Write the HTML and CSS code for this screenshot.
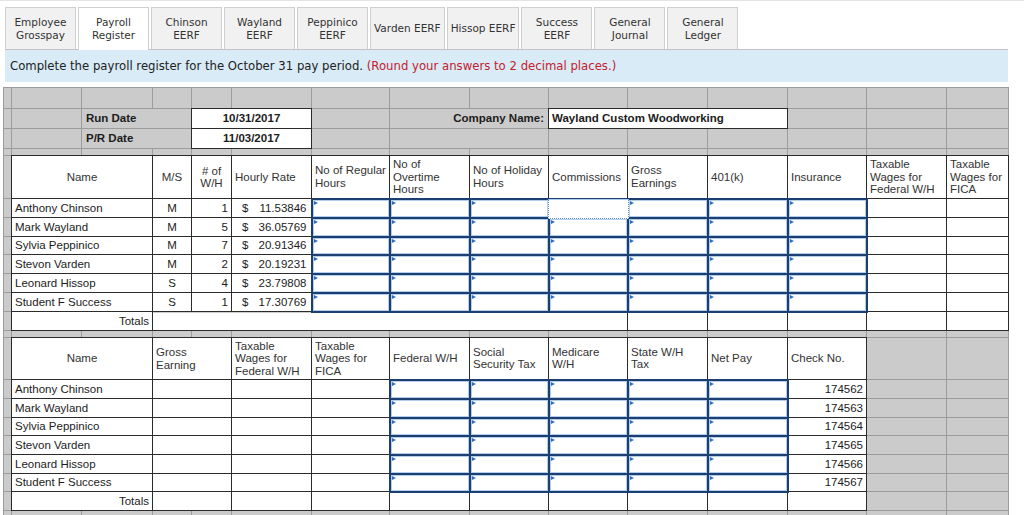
FILE: index.html
```html
<!DOCTYPE html>
<html>
<head>
<meta charset="utf-8">
<title>Payroll Register</title>
<link rel="stylesheet" href="styles.css">
</head>
<body>
<div class="page">
  <nav class="tabs">
    <div class="tab">Employee<br>Grosspay</div>
    <div class="tab active">Payroll<br>Register</div>
    <div class="tab">Chinson<br>EERF</div>
    <div class="tab">Wayland<br>EERF</div>
    <div class="tab">Peppinico<br>EERF</div>
    <div class="tab">Varden EERF</div>
    <div class="tab">Hissop EERF</div>
    <div class="tab">Success<br>EERF</div>
    <div class="tab">General<br>Journal</div>
    <div class="tab">General<br>Ledger</div>
  </nav>
  <div class="banner">Complete the payroll register for the October 31 pay period.&nbsp;<span class="note">(Round your answers to 2 decimal places.)</span></div>

  <table class="sheet">
    <colgroup>
      <col class="k0"><col class="k1"><col class="k2"><col class="k3"><col class="k4"><col class="k5"><col class="k6"><col class="k7"><col class="k8"><col class="k9"><col class="k10"><col class="k11"><col class="k12"><col class="k13"><col class="k14">
    </colgroup>
    <tbody>
      <tr class="h21"><td></td><td></td><td></td><td></td><td></td><td></td><td></td><td></td><td></td><td></td><td></td><td></td><td></td><td></td><td></td></tr>
      <tr class="h20">
        <td></td><td></td>
        <td colspan="2" class="lbl">Run Date</td>
        <td colspan="2" class="w b c">10/31/2017</td>
        <td></td>
        <td colspan="2" class="lbl r">Company Name:</td>
        <td colspan="3" class="w b">Wayland Custom Woodworking</td>
        <td></td><td></td><td></td>
      </tr>
      <tr class="h20">
        <td></td><td></td>
        <td colspan="2" class="lbl">P/R Date</td>
        <td colspan="2" class="w b c">11/03/2017</td>
        <td></td>
        <td colspan="2"></td>
        <td></td><td></td><td></td><td></td><td></td><td></td>
      </tr>
      <tr class="h7"><td></td><td></td><td></td><td></td><td></td><td></td><td></td><td></td><td></td><td></td><td></td><td></td><td></td><td></td><td></td></tr>

      <tr class="h43 hd">
        <td class="g"></td>
        <td colspan="2" class="w c">Name</td>
        <td class="w c">M/S</td>
        <td class="w c"># of<br>W/H</td>
        <td class="w">Hourly Rate</td>
        <td class="w">No of Regular<br>Hours</td>
        <td class="w">No of<br>Overtime<br>Hours</td>
        <td class="w">No of Holiday<br>Hours</td>
        <td class="w">Commissions</td>
        <td class="w">Gross<br>Earnings</td>
        <td class="w">401(k)</td>
        <td class="w">Insurance</td>
        <td class="w">Taxable<br>Wages for<br>Federal W/H</td>
        <td class="w">Taxable<br>Wages for<br>FICA</td>
      </tr>
      <tr class="h19">
        <td></td><td colspan="2" class="w">Anthony Chinson</td><td class="w c">M</td><td class="w r">1</td>
        <td class="w rate"><span>$</span><span>11.53846</span></td>
        <td class="in"></td><td class="in"></td><td class="in"></td><td class="in focus"></td><td class="in"></td><td class="in"></td><td class="in"></td>
        <td class="w"></td><td class="w"></td>
      </tr>
      <tr class="h19">
        <td></td><td colspan="2" class="w">Mark Wayland</td><td class="w c">M</td><td class="w r">5</td>
        <td class="w rate"><span>$</span><span>36.05769</span></td>
        <td class="in"></td><td class="in"></td><td class="in"></td><td class="in"></td><td class="in"></td><td class="in"></td><td class="in"></td>
        <td class="w"></td><td class="w"></td>
      </tr>
      <tr class="h18">
        <td></td><td colspan="2" class="w">Sylvia Peppinico</td><td class="w c">M</td><td class="w r">7</td>
        <td class="w rate"><span>$</span><span>20.91346</span></td>
        <td class="in"></td><td class="in"></td><td class="in"></td><td class="in"></td><td class="in"></td><td class="in"></td><td class="in"></td>
        <td class="w"></td><td class="w"></td>
      </tr>
      <tr class="h19">
        <td></td><td colspan="2" class="w">Stevon Varden</td><td class="w c">M</td><td class="w r">2</td>
        <td class="w rate"><span>$</span><span>20.19231</span></td>
        <td class="in"></td><td class="in"></td><td class="in"></td><td class="in"></td><td class="in"></td><td class="in"></td><td class="in"></td>
        <td class="w"></td><td class="w"></td>
      </tr>
      <tr class="h19">
        <td></td><td colspan="2" class="w">Leonard Hissop</td><td class="w c">S</td><td class="w r">4</td>
        <td class="w rate"><span>$</span><span>23.79808</span></td>
        <td class="in"></td><td class="in"></td><td class="in"></td><td class="in"></td><td class="in"></td><td class="in"></td><td class="in"></td>
        <td class="w"></td><td class="w"></td>
      </tr>
      <tr class="h19">
        <td></td><td colspan="2" class="w">Student F Success</td><td class="w c">S</td><td class="w r">1</td>
        <td class="w rate"><span>$</span><span>17.30769</span></td>
        <td class="in"></td><td class="in"></td><td class="in"></td><td class="in"></td><td class="in"></td><td class="in"></td><td class="in"></td>
        <td class="w"></td><td class="w"></td>
      </tr>
      <tr class="h19">
        <td></td><td colspan="2" class="w r">Totals</td>
        <td colspan="7" class="w"></td>
        <td class="w"></td><td class="w"></td><td class="w"></td><td class="w"></td><td class="w"></td>
      </tr>
      <tr class="h7"><td></td><td></td><td></td><td></td><td></td><td></td><td></td><td></td><td></td><td></td><td></td><td></td><td></td><td></td><td></td></tr>

      <tr class="h42 hd">
        <td></td>
        <td colspan="2" class="w c">Name</td>
        <td colspan="2" class="w">Gross<br>Earning</td>
        <td class="w">Taxable<br>Wages for<br>Federal W/H</td>
        <td class="w">Taxable<br>Wages for<br>FICA</td>
        <td class="w">Federal W/H</td>
        <td class="w">Social<br>Security Tax</td>
        <td class="w">Medicare<br>W/H</td>
        <td class="w">State W/H<br>Tax</td>
        <td class="w">Net Pay</td>
        <td class="w">Check No.</td>
        <td></td><td></td>
      </tr>
      <tr class="h19">
        <td></td><td colspan="2" class="w">Anthony Chinson</td><td colspan="2" class="w"></td><td class="w"></td><td class="w"></td>
        <td class="in"></td><td class="in"></td><td class="in"></td><td class="in"></td><td class="in"></td>
        <td class="w r">174562</td><td></td><td></td>
      </tr>
      <tr class="h19">
        <td></td><td colspan="2" class="w">Mark Wayland</td><td colspan="2" class="w"></td><td class="w"></td><td class="w"></td>
        <td class="in"></td><td class="in"></td><td class="in"></td><td class="in"></td><td class="in"></td>
        <td class="w r">174563</td><td></td><td></td>
      </tr>
      <tr class="h18">
        <td></td><td colspan="2" class="w">Sylvia Peppinico</td><td colspan="2" class="w"></td><td class="w"></td><td class="w"></td>
        <td class="in"></td><td class="in"></td><td class="in"></td><td class="in"></td><td class="in"></td>
        <td class="w r">174564</td><td></td><td></td>
      </tr>
      <tr class="h19">
        <td></td><td colspan="2" class="w">Stevon Varden</td><td colspan="2" class="w"></td><td class="w"></td><td class="w"></td>
        <td class="in"></td><td class="in"></td><td class="in"></td><td class="in"></td><td class="in"></td>
        <td class="w r">174565</td><td></td><td></td>
      </tr>
      <tr class="h19">
        <td></td><td colspan="2" class="w">Leonard Hissop</td><td colspan="2" class="w"></td><td class="w"></td><td class="w"></td>
        <td class="in"></td><td class="in"></td><td class="in"></td><td class="in"></td><td class="in"></td>
        <td class="w r">174566</td><td></td><td></td>
      </tr>
      <tr class="h18">
        <td></td><td colspan="2" class="w">Student F Success</td><td colspan="2" class="w"></td><td class="w"></td><td class="w"></td>
        <td class="in"></td><td class="in"></td><td class="in"></td><td class="in"></td><td class="in"></td>
        <td class="w r">174567</td><td></td><td></td>
      </tr>
      <tr class="h19">
        <td></td><td colspan="2" class="w r">Totals</td><td colspan="2" class="w"></td><td class="w"></td><td class="w"></td>
        <td class="w"></td><td class="w"></td><td class="w"></td><td class="w"></td><td class="w"></td>
        <td class="w"></td><td></td><td></td>
      </tr>
      <tr class="h7"><td></td><td></td><td></td><td></td><td></td><td></td><td></td><td></td><td></td><td></td><td></td><td></td><td></td><td></td><td></td></tr>
    </tbody>
  </table>
</div>
</body>
</html>
```

FILE: styles.css
```css
html, body {
  margin: 0;
  padding: 0;
  background: #ffffff;
}

.page {
  border-top: 1px solid #e4e4e4;
  padding-top: 6px;
}

/* ---------- tabs ---------- */
.tabs {
  display: flex;
  gap: 2px;
  margin-left: 5px;
  height: 42px;
}

.tab {
  min-width: 71px;
  box-sizing: border-box;
  padding: 0 3px;
  display: flex;
  align-items: center;
  justify-content: center;
  text-align: center;
  font: 10.5px/13px "DejaVu Sans", Verdana, sans-serif;
  color: #333333;
  background: #f1f1f1;
  border: 1px solid #cfcfcf;
  border-bottom: none;
  white-space: nowrap;
}

.tab.active {
  background: #ffffff;
  height: 43px;
  margin-bottom: -1px;
  position: relative;
  z-index: 1;
}

/* ---------- banner ---------- */
.banner {
  margin-left: 5px;
  width: 1003px;
  box-sizing: border-box;
  height: 33px;
  border-top: 1px solid #c4c4c4;
  background: #d8ebf7;
  padding-left: 5px;
  display: flex;
  align-items: center;
  font: 11.7px "DejaVu Sans", Verdana, sans-serif;
  color: #222222;
  white-space: nowrap;
}

.banner .note {
  color: #c4212c;
}

/* ---------- spreadsheet ---------- */
.sheet {
  margin-top: 5px;
  margin-left: 3px;
  border-collapse: collapse;
  table-layout: fixed;
  width: 1005px;
  background: #cbcbcb;
  font: 11.5px/13px "Liberation Sans", Arial, sans-serif;
  color: #1c1c1c;
}

.sheet col {
  border-left: 1px solid #9c9c9c;
  border-right: 1px solid #9c9c9c;
}

.sheet tr {
  border-top: 1px solid #9c9c9c;
  border-bottom: 1px solid #9c9c9c;
}

.k0 { width: 8px; }
.k1 { width: 70px; }
.k2 { width: 71px; }
.k3 { width: 39px; }
.k4 { width: 40px; }
.k5 { width: 80px; }
.k6 { width: 78px; }
.k7 { width: 80px; }
.k8 { width: 79px; }
.k9 { width: 79px; }
.k10 { width: 80px; }
.k11 { width: 80px; }
.k12 { width: 79px; }
.k13 { width: 80px; }
.k14 { width: 62px; }

.h21 { height: 21px; }
.h20 { height: 20px; }
.h19 { height: 19px; }
.h18 { height: 18px; }
.h7 { height: 7px; }
.h43 { height: 43px; }
.h42 { height: 42px; }

.sheet td {
  padding: 0 3px;
  white-space: nowrap;
  overflow: hidden;
  vertical-align: middle;
}

.sheet td.w {
  background: #ffffff;
  border: 1px solid #2b2b2b;
}

.sheet .hd td.w {
  color: #333333;
  line-height: 12.5px;
}

.sheet td.c { text-align: center; }
.sheet td.r { text-align: right; }
.sheet td.b { font-weight: bold; }

.sheet td.lbl {
  font-weight: bold;
  padding-left: 4px;
}

.sheet td.lbl.r {
  padding-right: 4px;
}

.sheet td.rate {
  padding: 0 4px 0 10px;
}

.rate span:first-child {
  float: left;
}

.rate span:last-child {
  float: right;
}

.sheet td.in {
  background: #ffffff;
  border: 2px solid #1d3f70;
  box-shadow: inset 0 0 0 1px #b3cdef;
  position: relative;
}

.sheet td.in::before {
  content: "";
  position: absolute;
  left: 1px;
  top: 1px;
  border-left: 4px solid #2c6dc2;
  border-top: 2.5px solid transparent;
  border-bottom: 2.5px solid transparent;
}

/* focused cell: dotted outline drawn over the shared borders */
.sheet td.in.focus {
  overflow: visible;
  box-shadow: none;
}

.sheet td.in.focus::before {
  top: -1px;
  left: -2px;
  right: -2px;
  bottom: -2px;
  border: 1px dotted #5b8fd6;
  border-top: 1px solid #b3cdef;
  background: #ffffff;
  z-index: 1;
}
```
